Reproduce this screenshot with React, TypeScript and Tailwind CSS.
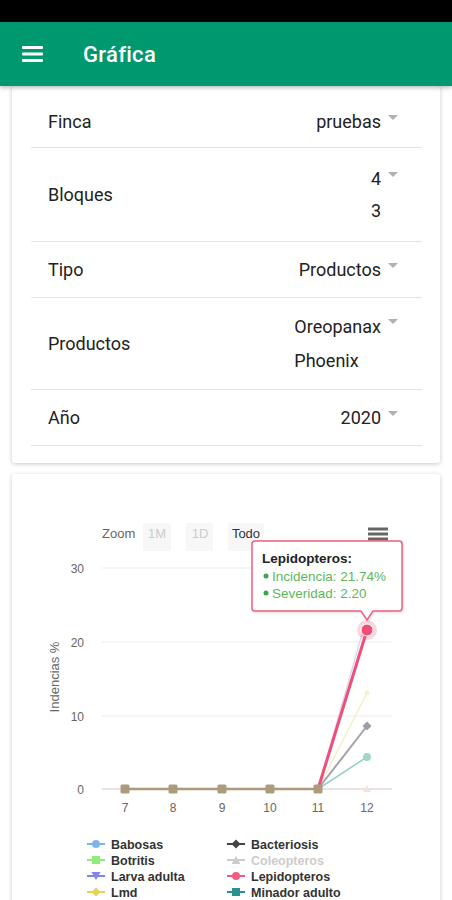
import React from "react";

type Row = { label: string; values: string[]; h: string; lead: string; extra?: string };

const ROWS: Row[] = [
  { label: "Finca", values: ["pruebas"], h: "h-[62px]", lead: "leading-[32px]", extra: "pt-[10px]" },
  { label: "Bloques", values: ["4", "3"], h: "h-[94px]", lead: "leading-[32px]" },
  { label: "Tipo", values: ["Productos"], h: "h-[56px]", lead: "leading-[32px]" },
  { label: "Productos", values: ["Oreopanax", "Phoenix"], h: "h-[92px]", lead: "leading-[34px]" },
  { label: "Año", values: ["2020"], h: "h-[56px]", lead: "leading-[32px]" },
];

type LegendItem = { name: string; color: string; symbol: "circle" | "square" | "diamond" | "triangle" | "triangle-down"; muted?: boolean };

const LEGEND: LegendItem[][] = [
  [
    { name: "Babosas", color: "#7cb5ec", symbol: "circle" },
    { name: "Botritis", color: "#90ed7d", symbol: "square" },
    { name: "Larva adulta", color: "#8085e9", symbol: "triangle-down" },
    { name: "Lmd", color: "#e4d354", symbol: "diamond" },
  ],
  [
    { name: "Bacteriosis", color: "#434348", symbol: "diamond" },
    { name: "Coleopteros", color: "#cccccc", symbol: "triangle", muted: true },
    { name: "Lepidopteros", color: "#f15c80", symbol: "circle" },
    { name: "Minador adulto", color: "#2b908f", symbol: "square" },
  ],
];

const X_POS = [113, 161, 210, 258, 306, 355];
const Y_GRID = [
  { v: "30", y: 94 },
  { v: "20", y: 168 },
  { v: "10", y: 242 },
  { v: "0", y: 315 },
];

function Marker({ x, y, symbol, color }: { x: number; y: number; symbol: LegendItem["symbol"]; color: string }) {
  if (symbol === "circle") return <circle cx={x} cy={y} r={4} fill={color} />;
  if (symbol === "square") return <rect x={x - 4} y={y - 4} width={8} height={8} fill={color} />;
  if (symbol === "diamond") return <path d={`M${x} ${y - 4.5} L${x + 4.5} ${y} L${x} ${y + 4.5} L${x - 4.5} ${y} Z`} fill={color} />;
  if (symbol === "triangle") return <path d={`M${x} ${y - 4} L${x + 4.5} ${y + 4} L${x - 4.5} ${y + 4} Z`} fill={color} />;
  return <path d={`M${x - 4.5} ${y - 4} L${x + 4.5} ${y - 4} L${x} ${y + 4} Z`} fill={color} />;
}

function Chart() {
  return (
    <svg width="428" height="426" viewBox="0 0 428 426" style={{ fontFamily: "'Liberation Sans', Arial, sans-serif" }}>
      {/* range selector */}
      <text x="90" y="64" fontSize="13" fill="#666">Zoom</text>
      <rect x="131" y="49" width="28" height="28" rx="2" fill="#f7f7f7" />
      <text x="145" y="64" fontSize="13" fill="#cccccc" textAnchor="middle">1M</text>
      <rect x="174" y="49" width="27" height="28" rx="2" fill="#f7f7f7" />
      <text x="188" y="64" fontSize="13" fill="#cccccc" textAnchor="middle">1D</text>
      <rect x="216" y="49" width="36" height="28" rx="2" fill="#f7f7f7" />
      <text x="234" y="64" fontSize="13" fill="#333" textAnchor="middle">Todo</text>

      {/* export menu */}
      <g stroke="#666" strokeWidth="3">
        <line x1="356" y1="55" x2="376" y2="55" />
        <line x1="356" y1="60" x2="376" y2="60" />
        <line x1="356" y1="65" x2="376" y2="65" />
      </g>

      {/* grid */}
      {Y_GRID.map((g) => (
        <g key={g.v}>
          <line x1="90" y1={g.y} x2="380" y2={g.y} stroke="#ebebeb" strokeWidth="1" />
          <text x="72" y={g.y + 5} fontSize="12" fill="#666" textAnchor="end">{g.v}</text>
        </g>
      ))}
      <line x1="90" y1="315" x2="380" y2="315" stroke="#e8d8d8" strokeWidth="1.5" />
      {["7", "8", "9", "10", "11", "12"].map((l, i) => (
        <text key={l} x={X_POS[i]} y="338" fontSize="12" fill="#666" textAnchor="middle">{l}</text>
      ))}
      <text x="0" y="0" fontSize="13" fill="#666" textAnchor="middle" transform="translate(47 203) rotate(-90)">
        Indencias %
      </text>

      {/* series */}
      <line x1="113" y1="315" x2="306" y2="315" stroke="#ad9878" strokeWidth="2.5" />
      <line x1="306" y1="315" x2="352" y2="153" stroke="#d8daf0" strokeWidth="1.5" />
      <line x1="306" y1="315" x2="355" y2="219" stroke="#f4efc8" strokeWidth="1.5" />
      <line x1="306" y1="315" x2="355" y2="252" stroke="#a3a3a6" strokeWidth="2" />
      <line x1="306" y1="315" x2="355" y2="283" stroke="#96cfc0" strokeWidth="1.5" />
      <line x1="306" y1="315" x2="355" y2="156" stroke="#ef4f79" strokeWidth="3" />
      {X_POS.slice(0, 5).map((x) => (
        <rect key={x} x={x - 4.5} y={310.5} width="9" height="9" rx="1.5" fill="#ab9c7c" />
      ))}
      <circle cx="355" cy="219" r="2.5" fill="#f6f1cc" />
      <path d="M355 247.5 L359.5 252 L355 256.5 L350.5 252 Z" fill="#9d9da2" />
      <circle cx="355" cy="283" r="4" fill="#a3d6c8" />
      <path d="M355 311 L359 318 L351 318 Z" fill="#f6e4d8" />
      <circle cx="355" cy="156" r="10" fill="#f15c80" opacity="0.25" />
      <circle cx="355" cy="156" r="6" fill="#ef4f79" stroke="#fff" strokeWidth="1" />

      {/* tooltip */}
      <path
        d="M244 68 H388 Q391 68 391 71 V135 Q391 138 388 138 H362 L356 147 L350 138 H244 Q241 138 241 135 V71 Q241 68 244 68 Z"
        fill="none"
        stroke="rgba(0,0,0,0.08)"
        strokeWidth="3"
      />
      <path
        d="M243 67 H387 Q390 67 390 70 V134 Q390 137 387 137 H361 L355 146 L349 137 H243 Q240 137 240 134 V70 Q240 67 243 67 Z"
        fill="#fff"
        fillOpacity="0.96"
        stroke="#f15c80"
        strokeWidth="1.5"
      />
      <text x="250" y="89" fontSize="13.5" fontWeight="700" fill="#222">Lepidopteros:</text>
      <circle cx="254" cy="102" r="2.5" fill="#3fa34d" />
      <text x="260" y="106.5" fontSize="13.5" fill="#5cb85c">Incidencia: 21.74%</text>
      <circle cx="254" cy="119" r="2.5" fill="#3fa34d" />
      <text x="260" y="123.5" fontSize="13.5" fill="#5cb85c">Severidad: 2.20</text>

      {/* legend */}
      {LEGEND.map((col, ci) => {
        const lx = ci === 0 ? 75 : 215;
        const tx = ci === 0 ? 99 : 239;
        return col.map((item, ri) => {
          const y = 370 + ri * 16;
          return (
            <g key={item.name}>
              <line x1={lx} y1={y} x2={lx + 18} y2={y} stroke={item.color} strokeWidth="2" />
              <Marker x={lx + 9} y={y} symbol={item.symbol} color={item.color} />
              <text x={tx} y={y + 4.5} fontSize="12.5" fontWeight="700" fill={item.muted ? "#cccccc" : "#333"}>
                {item.name}
              </text>
            </g>
          );
        });
      })}
    </svg>
  );
}

export default function App() {
  return (
    <div className="w-[452px] h-[900px] overflow-hidden bg-white font-['Roboto','Liberation_Sans',sans-serif] text-[#222]">
      <div className="h-[22px] bg-black" />
      <header className="relative z-10 h-[64px] bg-[#00986f] flex items-center shadow-[0_2px_4px_rgba(0,0,0,0.25)]">
        <svg width="21" height="16" viewBox="0 0 21 16" className="ml-[22px]">
          <rect x="0" y="0" width="21" height="3" rx="1" fill="#fff" />
          <rect x="0" y="6.5" width="21" height="3" rx="1" fill="#fff" />
          <rect x="0" y="13" width="21" height="3" rx="1" fill="#fff" />
        </svg>
        <h1 className="ml-[40px] text-white text-[22px] font-medium tracking-[0.3px]">Gráfica</h1>
      </header>

      <main className="px-[12px]">
        <section className="bg-white rounded-[3px] shadow-[0_1px_4px_rgba(0,0,0,0.22)] pl-[19px] pr-[18px] pb-[17px]">
          {ROWS.map((r) => (
            <div key={r.label} className={`${r.h} ${r.extra ?? ""} flex items-center justify-between border-b border-[#e4e4e4]`}>
              <span className="pl-[17px] text-[18px]">{r.label}</span>
              <div className="flex items-start pr-[24px]">
                <div className={`text-[18px] ${r.lead} text-left`}>
                  {r.values.map((v) => (
                    <div key={v}>{v}</div>
                  ))}
                </div>
                <span className="ml-[7px] mt-[9px] w-0 h-0 border-l-[5px] border-r-[5px] border-t-[5px] border-l-transparent border-r-transparent border-t-[#b0b0b0]" />
              </div>
            </div>
          ))}
        </section>

        <section className="mt-[11px] h-[440px] bg-white rounded-[3px] shadow-[0_1px_4px_rgba(0,0,0,0.22)]">
          <Chart />
        </section>
      </main>
    </div>
  );
}
